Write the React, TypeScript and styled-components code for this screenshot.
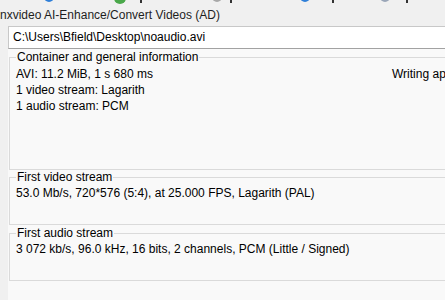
import React, { FC } from 'react';
import styled, { createGlobalStyle } from 'styled-components';

const GlobalStyle = createGlobalStyle`
  html, body {
    margin: 0;
    padding: 0;
    background: #f0f0f0;
    overflow: hidden;
  }
  body {
    font-family: 'Liberation Sans', Arial, sans-serif;
    font-size: 12px;
    color: #000;
  }
`;

const Window = styled.div`
  display: flex;
  flex-direction: column;
  width: 640px;
  height: 300px;
`;

/* only the bottom of the toolbar is still visible */
const ToolbarClip = styled.div`
  height: 4px;
  overflow: hidden;
`;

const Toolbar = styled.div`
  display: flex;
  align-items: flex-start;
  height: 16px;
  margin-top: -8px;
  padding-left: 44px;
`;

const ToolItem = styled.div<{ width: number }>`
  display: flex;
  align-items: flex-start;
  width: ${(props) => props.width}px;
  flex-shrink: 0;
`;

const ToolIcon = styled.span<{ color: string; size: number }>`
  display: block;
  width: ${(props) => props.size}px;
  height: ${(props) => props.size}px;
  border-radius: 50%;
  background: ${(props) => props.color};
`;

/* descender of a toolbar label, the rest is cut away */
const Descender = styled.span<{ offset: number }>`
  display: block;
  width: 2px;
  height: 11px;
  margin-left: ${(props) => props.offset}px;
  background: #333;
`;

const Title = styled.div`
  height: 22px;
  line-height: 22px;
  color: #1e1e1e;
  white-space: nowrap;
`;

const PathInput = styled.div`
  margin-left: 8px;
  height: 23px;
  box-sizing: border-box;
  background: #fff;
  border: 1px solid #c8c8c8;
  border-bottom-color: #a2a2a2;
  border-right: none;
  padding-left: 4px;
  line-height: 21px;
  white-space: nowrap;
`;

const Panel = styled.div`
  flex: 1;
  margin-left: 8px;
  padding: 1px 0 0 1px;
  background: #f9f9f9;
  display: flex;
  flex-direction: column;
`;

const Group = styled.fieldset<{ height: number; gap: number }>`
  margin: 0 0 ${(props) => props.gap}px 0;
  padding: 0 6px;
  height: ${(props) => props.height}px;
  box-sizing: border-box;
  border: 1px solid #dadada;
  border-right: none;
  min-width: 0;
`;

const Legend = styled.legend`
  padding: 0 1px;
  line-height: 14px;
  color: #000;
`;

const Lines = styled.div<{ top: number }>`
  margin-top: ${(props) => props.top}px;
  display: grid;
  grid-template-columns: 376px 1fr;
  line-height: 16px;
  white-space: nowrap;
`;

const Line = styled.span`
  grid-column: 1;
`;

const Side = styled.span`
  grid-column: 2;
  grid-row: 1;
`;

const tools = [
  { color: '#2f7fd8', size: 10, desc: 0, width: 70 },
  { color: '#4aa84a', size: 12, desc: 14, width: 98 },
  { color: '#a8a8a8', size: 10, desc: 8, width: 88 },
  { color: '#2f7fd8', size: 10, desc: 22, width: 80 },
  { color: '#9aa6b8', size: 10, desc: 16, width: 60 },
];

const App: FC = () => {
  return (
    <>
      <GlobalStyle />
      <Window>
        <ToolbarClip>
          <Toolbar>
            {tools.map((t, i) => (
              <ToolItem key={i} width={t.width}>
                <ToolIcon color={t.color} size={t.size} />
                {t.desc > 0 && <Descender offset={t.desc} />}
              </ToolItem>
            ))}
          </Toolbar>
        </ToolbarClip>
        <Title>nxvideo AI-Enhance/Convert Videos (AD)</Title>
        <PathInput>C:\Users\Bfield\Desktop\noaudio.avi</PathInput>
        <Panel>
          <Group height={120} gap={0}>
            <Legend>Container and general information</Legend>
            <Lines top={2}>
              <Line>AVI: 11.2 MiB, 1 s 680 ms</Line>
              <Side>Writing ap</Side>
              <Line>1 video stream: Lagarith</Line>
              <Line>1 audio stream: PCM</Line>
            </Lines>
          </Group>
          <Group height={55} gap={1}>
            <Legend>First video stream</Legend>
            <Lines top={1}>
              <Line>53.0 Mb/s, 720*576 (5:4), at 25.000 FPS, Lagarith (PAL)</Line>
            </Lines>
          </Group>
          <Group height={55} gap={0}>
            <Legend>First audio stream</Legend>
            <Lines top={1}>
              <Line>3 072 kb/s, 96.0 kHz, 16 bits, 2 channels, PCM (Little / Signed)</Line>
            </Lines>
          </Group>
        </Panel>
      </Window>
    </>
  );
};

export default App;
